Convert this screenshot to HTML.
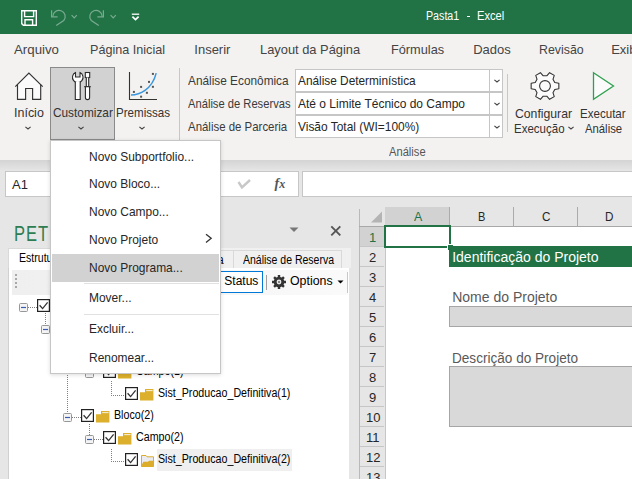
<!DOCTYPE html>
<html><head><meta charset="utf-8"><style>
html,body{margin:0;padding:0;width:632px;height:479px;overflow:hidden;background:#fff}
body{position:relative;font-family:"Liberation Sans",sans-serif}
.r{position:absolute;overflow:visible}
.t{position:absolute;line-height:1;white-space:pre}
</style></head><body>
<div class="r" style="left:0px;top:0px;width:632px;height:34px;background:#217346"></div>
<div class="r" style="left:0px;top:34px;width:632px;height:126px;background:#f3f2f1"></div>
<div class="r" style="left:0px;top:160px;width:632px;height:319px;background:#e6e6e6"></div>
<div class="r" style="left:0px;top:160px;width:632px;height:11px;background:linear-gradient(#d4d4d4,#e6e6e6)"></div>
<svg class="r" style="left:0px;top:0px;" width="160" height="34" viewBox="0 0 160 34">
<g fill="none" stroke="#fff" stroke-width="1.4">
<path d="M21.7 10.7 H36.3 V25.3 H23.4 L21.7 23.6 Z"/>
<path d="M24.6 10.7 V16.6 H33.6 V10.7"/>
<path d="M25 25.3 V19.8 H32.6 V25.3"/>
</g>
<g fill="none" stroke="#7aab90" stroke-width="1.2">
<path d="M51.6 10.3 V16.8 H57.6"/>
<path d="M52.8 16.5 A6.2 6.2 0 1 1 63.75 20.5 L56.2 25.6"/>
<path d="M71.6 15.2 L74.2 17.8 L76.8 15.2"/>
<path d="M103.4 10.3 V16.8 H97.4"/>
<path d="M102.2 16.5 A6.2 6.2 0 1 0 91.25 20.5 L98.8 25.6"/>
<path d="M110.6 15.2 L113.2 17.8 L115.8 15.2"/>
</g>
<path d="M131.8 14.2 H139.2" stroke="#fff" stroke-width="1.3"/>
<path d="M132.4 16.6 L135.5 19.6 L138.6 16.6" fill="none" stroke="#fff" stroke-width="1.7"/>
</svg>
<div class="t" style="left:426px;top:9.74px;font-size:12px;color:#fff;transform:scaleX(0.89);transform-origin:0 0;">Pasta1</div>
<div class="r" style="left:467px;top:16px;width:3px;height:1px;background:#fff"></div>
<div class="t" style="left:476.6px;top:9.74px;font-size:12px;color:#fff;transform:scaleX(0.93);transform-origin:0 0;">Excel</div>
<div class="t" style="left:13.5px;top:43.20px;font-size:13px;color:#444;transform:scaleX(1.02);transform-origin:0 0;">Arquivo</div>
<div class="t" style="left:89.5px;top:43.20px;font-size:13px;color:#444;transform:scaleX(0.97);transform-origin:0 0;">Página Inicial</div>
<div class="t" style="left:194.3px;top:43.20px;font-size:13px;color:#444;transform:scaleX(1.0);transform-origin:0 0;">Inserir</div>
<div class="t" style="left:260.3px;top:43.20px;font-size:13px;color:#444;transform:scaleX(0.99);transform-origin:0 0;">Layout da Página</div>
<div class="t" style="left:391.3px;top:43.20px;font-size:13px;color:#444;transform:scaleX(0.98);transform-origin:0 0;">Fórmulas</div>
<div class="t" style="left:473.2px;top:43.20px;font-size:13px;color:#444;transform:scaleX(1.0);transform-origin:0 0;">Dados</div>
<div class="t" style="left:538.6px;top:43.20px;font-size:13px;color:#444;transform:scaleX(0.95);transform-origin:0 0;">Revisão</div>
<div class="t" style="left:611.2px;top:43.20px;font-size:13px;color:#444;">Exib</div>
<svg class="r" style="left:10px;top:68px;" width="40" height="35" viewBox="0 0 40 35">
<path d="M7.5 16.6 V31.4 H15.6 V20.5 H22.6 V31.4 H30.7 V16.6" fill="#fbfbfb" stroke="#333" stroke-width="1.15"/>
<path d="M7.5 16.6 L18.9 5.2 L30.7 16.6 Z" fill="#fbfbfb"/>
<path d="M5.3 18.6 L18.9 5 L32.7 18.6" fill="none" stroke="#333" stroke-width="1.2"/>
</svg>
<div class="t" style="left:13.6px;top:105.80px;font-size:13px;color:#333;transform:scaleX(0.96);transform-origin:0 0;">Início</div>
<svg class="r" style="left:24.3px;top:125.19999999999999px;" width="8" height="6" viewBox="0 0 8 6"><path d="M1.4 1.9 L4 4.0 L6.6 1.9" fill="none" stroke="#444" stroke-width="1.15"/></svg>
<div class="r" style="left:50px;top:67px;width:65px;height:73px;background:#d2d2d2;border:1px solid #8a8a8a;box-sizing:border-box"></div>
<svg class="r" style="left:60px;top:64px;" width="50" height="40" viewBox="0 0 50 40">
<g fill="#fff" stroke="#2b2b2b" stroke-width="1.1">
<path d="M15.5 8.5 A5.3 5.3 0 1 0 20 8.5 V13 H15.5 Z" />
<path d="M15.3 17.5 V35.5 H20.2 V17.5"/>
<rect x="25.3" y="8.5" width="4.4" height="5" />
<path d="M26.3 13.5 V22.5 H28.7 V13.5"/>
<path d="M24.2 22.7 H30.8"/>
<path d="M25.4 22.7 V33.5 Q25.4 35.6 27.5 35.6 Q29.6 35.6 29.6 33.5 V22.7 Z"/>
</g>
</svg>
<div class="t" style="left:52.5px;top:105.80px;font-size:13px;color:#333;transform:scaleX(0.91);transform-origin:0 0;">Customizar</div>
<svg class="r" style="left:77.4px;top:125.1px;" width="8" height="6" viewBox="0 0 8 6"><path d="M1.4 1.9 L4 4.0 L6.6 1.9" fill="none" stroke="#444" stroke-width="1.15"/></svg>
<svg class="r" style="left:125px;top:68px;" width="38" height="35" viewBox="0 0 38 35">
<path d="M4.5 4 V31.5 H32" fill="none" stroke="#333" stroke-width="1.1"/>
<g fill="#555">
<rect x="7.9" y="22.9" width="2" height="2"/><rect x="15.1" y="17.9" width="2" height="2"/>
<rect x="15.1" y="27.7" width="2" height="2"/><rect x="20.9" y="23.8" width="2" height="2"/>
<rect x="23" y="12.9" width="2" height="2"/><rect x="26.9" y="17.8" width="2" height="2"/>
<rect x="26.9" y="4.9" width="2" height="2"/>
</g>
<path d="M6 26.9 C14 26.8 27 22 31.2 5.1" fill="none" stroke="#3a96dd" stroke-width="1.5"/>
</svg>
<div class="t" style="left:116px;top:105.80px;font-size:13px;color:#333;transform:scaleX(0.89);transform-origin:0 0;">Premissas</div>
<svg class="r" style="left:138.4px;top:125.1px;" width="8" height="6" viewBox="0 0 8 6"><path d="M1.4 1.9 L4 4.0 L6.6 1.9" fill="none" stroke="#444" stroke-width="1.15"/></svg>
<div class="r" style="left:179px;top:68px;width:1px;height:88px;background:#c8c8c8"></div>
<div class="t" style="left:188.2px;top:74.10px;font-size:13px;color:#3a3a3a;transform:scaleX(0.91);transform-origin:0 0;">Análise Econômica</div>
<div class="t" style="left:188.2px;top:97.00px;font-size:13px;color:#3a3a3a;transform:scaleX(0.86);transform-origin:0 0;">Análise de Reservas</div>
<div class="t" style="left:188.2px;top:120.20px;font-size:13px;color:#3a3a3a;transform:scaleX(0.88);transform-origin:0 0;">Análise de Parceria</div>
<div class="r" style="left:295px;top:69px;width:208px;height:23px;background:#fff;border:1px solid #c6c6c6;box-sizing:border-box"></div>
<div class="r" style="left:489px;top:69px;width:1px;height:23px;background:#c6c6c6"></div>
<svg class="r" style="left:492.8px;top:78.4px;" width="8" height="6" viewBox="0 0 8 6"><path d="M1.4 1.9 L4 4.0 L6.6 1.9" fill="none" stroke="#444" stroke-width="1.15"/></svg>
<div class="t" style="left:298.4px;top:73.50px;font-size:13px;color:#262626;transform:scaleX(0.91);transform-origin:0 0;">Análise Determinística</div>
<div class="r" style="left:295px;top:92px;width:208px;height:23px;background:#fff;border:1px solid #c6c6c6;box-sizing:border-box"></div>
<div class="r" style="left:489px;top:92px;width:1px;height:23px;background:#c6c6c6"></div>
<svg class="r" style="left:492.8px;top:101.4px;" width="8" height="6" viewBox="0 0 8 6"><path d="M1.4 1.9 L4 4.0 L6.6 1.9" fill="none" stroke="#444" stroke-width="1.15"/></svg>
<div class="t" style="left:298.4px;top:96.50px;font-size:13px;color:#262626;transform:scaleX(0.922);transform-origin:0 0;">Até o Limite Técnico do Campo</div>
<div class="r" style="left:295px;top:115px;width:208px;height:23px;background:#fff;border:1px solid #c6c6c6;box-sizing:border-box"></div>
<div class="r" style="left:489px;top:115px;width:1px;height:23px;background:#c6c6c6"></div>
<svg class="r" style="left:492.8px;top:124.4px;" width="8" height="6" viewBox="0 0 8 6"><path d="M1.4 1.9 L4 4.0 L6.6 1.9" fill="none" stroke="#444" stroke-width="1.15"/></svg>
<div class="t" style="left:298.4px;top:119.50px;font-size:13px;color:#262626;transform:scaleX(0.918);transform-origin:0 0;">Visão Total (WI=100%)</div>
<div class="r" style="left:507px;top:74px;width:1px;height:58px;background:#c8c8c8"></div>
<svg class="r" style="left:526px;top:68px;" width="38" height="35" viewBox="0 0 38 35">
<polygon fill="#fbfbfb" stroke="#333" stroke-width="1.1" stroke-linejoin="round" points="28.77,14.44 32.84,15.31 32.84,20.69 28.77,21.56 26.97,24.68 28.25,28.64 23.59,31.33 20.81,28.24 17.19,28.24 14.41,31.33 9.75,28.64 11.03,24.68 9.23,21.56 5.16,20.69 5.16,15.31 9.23,14.44 11.03,11.32 9.75,7.36 14.41,4.67 17.19,7.76 20.81,7.76 23.59,4.67 28.25,7.36 26.97,11.32"/>
<circle cx="19" cy="18" r="5.4" fill="none" stroke="#333" stroke-width="1.1"/>
</svg>
<div class="t" style="left:515.3px;top:106.50px;font-size:13px;color:#333;transform:scaleX(0.94);transform-origin:0 0;">Configurar</div>
<div class="t" style="left:513.6px;top:122.00px;font-size:13px;color:#333;transform:scaleX(0.885);transform-origin:0 0;">Execução</div>
<svg class="r" style="left:566.8px;top:125.19999999999999px;" width="8" height="6" viewBox="0 0 8 6"><path d="M1.4 1.9 L4 4.0 L6.6 1.9" fill="none" stroke="#444" stroke-width="1.15"/></svg>
<svg class="r" style="left:588px;top:68px;" width="30" height="35" viewBox="0 0 30 35">
<path d="M5.5 4.7 L25.5 18 L5.5 31.3 Z" fill="#fbfbfb" stroke="#2ea04f" stroke-width="1.3" stroke-linejoin="miter"/>
</svg>
<div class="t" style="left:579.6px;top:106.50px;font-size:13px;color:#333;transform:scaleX(0.89);transform-origin:0 0;">Executar</div>
<div class="t" style="left:584.5px;top:122.00px;font-size:13px;color:#333;transform:scaleX(0.87);transform-origin:0 0;">Análise</div>
<div class="t" style="left:389px;top:145.84px;font-size:12px;color:#555;transform:scaleX(0.93);transform-origin:0 0;">Análise</div>
<div class="r" style="left:5px;top:171px;width:294px;height:26px;background:#fff;border:1px solid #c6c6c6;box-sizing:border-box"></div>
<div class="t" style="left:12px;top:177.60px;font-size:13px;color:#262626;">A1</div>
<svg class="r" style="left:236px;top:176px;" width="18" height="16" viewBox="0 0 18 16"><path d="M2.5 6 L6 11.5 L14 4" fill="none" stroke="#c8c8c8" stroke-width="2.4"/></svg>
<div class="t" style="left:274.5px;top:177.15px;font-size:14px;color:#555;font-family:'Liberation Serif',serif;font-style:italic;font-weight:bold;">f<span style="font-size:12px">x</span></div>
<div class="r" style="left:302px;top:171px;width:340px;height:26px;background:#fff;border:1px solid #c6c6c6;box-sizing:border-box"></div>
<div class="t" style="left:14.3px;top:222.98px;font-size:22px;color:#2e7d52;transform:scaleX(0.75);transform-origin:0 0;letter-spacing:1.3px;">PETR</div>
<svg class="r" style="left:288px;top:226px;" width="12" height="8" viewBox="0 0 12 8"><path d="M1.5 1.5 H10.5 L6 6 Z" fill="#777"/></svg>
<svg class="r" style="left:329px;top:224px;" width="14" height="14" viewBox="0 0 14 14"><path d="M2.3 2.3 L11.3 11.3 M11.3 2.3 L2.3 11.3" stroke="#555" stroke-width="1.9"/></svg>
<div class="r" style="left:8px;top:248px;width:343px;height:20px;background:#f0f0f0"></div>
<div class="r" style="left:8px;top:248px;width:60px;height:21px;background:#fff;border:1px solid #d9d9d9;border-bottom:none;box-sizing:border-box"></div>
<div class="t" style="left:18.8px;top:251.64px;font-size:12px;color:#000;transform:scaleX(0.88);transform-origin:0 0;">Estrutura</div>
<div class="r" style="left:150px;top:250px;width:84px;height:18px;background:#f0f0f0;border:1px solid #d9d9d9;border-bottom:none;box-sizing:border-box"></div>
<div class="t" style="right:408px;top:254.04px;font-size:12px;color:#000;transform:scaleX(0.88);transform-origin:100% 0">Premissas Econômica</div>
<div class="r" style="left:233px;top:250px;width:109px;height:18px;background:#f0f0f0;border:1px solid #d9d9d9;border-bottom:none;box-sizing:border-box"></div>
<div class="t" style="left:242.6px;top:254.04px;font-size:12px;color:#000;transform:scaleX(0.875);transform-origin:0 0;">Análise de Reserva</div>
<div class="r" style="left:8px;top:268px;width:341px;height:211px;background:#fff;border-left:1px solid #d0d0d0;box-sizing:border-box"></div>
<div class="r" style="left:12px;top:270px;width:336px;height:25px;background:linear-gradient(90deg,#efefef,#fafafa)"></div>
<div class="r" style="left:347px;top:272px;width:1px;height:21px;background:#c8c8c8"></div>
<div class="r" style="left:15px;top:274px;width:2px;height:2px;background:#a8a8a8"></div>
<div class="r" style="left:15px;top:278px;width:2px;height:2px;background:#a8a8a8"></div>
<div class="r" style="left:15px;top:282px;width:2px;height:2px;background:#a8a8a8"></div>
<div class="r" style="left:15px;top:286px;width:2px;height:2px;background:#a8a8a8"></div>
<div class="r" style="left:190px;top:271px;width:73px;height:22px;background:#fff;border:1px solid #0078d7;box-sizing:border-box"></div>
<div class="t" style="left:224.3px;top:275.44px;font-size:12px;color:#000;transform:scaleX(1.0);transform-origin:0 0;">Status</div>
<div class="r" style="left:266px;top:275px;width:1px;height:15px;background:#a0a0a0"></div>
<svg class="r" style="left:271px;top:274px;" width="16" height="16" viewBox="0 0 16 16">
<g transform="translate(8,8)" fill="#333">
<circle r="5.3"/>
<g stroke="#333" stroke-width="2.4">
<path d="M0 -7 V7 M-7 0 H7 M-4.95 -4.95 L4.95 4.95 M4.95 -4.95 L-4.95 4.95"/>
</g>
<circle r="2.4" fill="#e8e8e8"/>
<circle r="1" fill="#666"/>
</g></svg>
<div class="t" style="left:289.6px;top:275.44px;font-size:12px;color:#000;transform:scaleX(1.03);transform-origin:0 0;">Options</div>
<svg class="r" style="left:336px;top:279px;" width="9" height="6" viewBox="0 0 9 6"><path d="M1.5 1.5 H7.5 L4.5 4.5 Z" fill="#000"/></svg>
<div class="r" style="left:45px;top:313px;width:1px;height:12px;background:repeating-linear-gradient(180deg,#808080 0 1px,transparent 1px 2px)"></div>
<div class="r" style="left:67px;top:335px;width:1px;height:78px;background:repeating-linear-gradient(180deg,#808080 0 1px,transparent 1px 2px)"></div>
<div class="r" style="left:89px;top:357px;width:1px;height:12px;background:repeating-linear-gradient(180deg,#808080 0 1px,transparent 1px 2px)"></div>
<div class="r" style="left:111px;top:381px;width:1px;height:14px;background:repeating-linear-gradient(180deg,#808080 0 1px,transparent 1px 2px)"></div>
<div class="r" style="left:89px;top:424px;width:1px;height:11px;background:repeating-linear-gradient(180deg,#808080 0 1px,transparent 1px 2px)"></div>
<div class="r" style="left:111px;top:449px;width:1px;height:12px;background:repeating-linear-gradient(180deg,#808080 0 1px,transparent 1px 2px)"></div>
<div class="r" style="left:157px;top:449px;width:135px;height:22px;background:#efefef"></div>
<svg class="r" style="left:19px;top:303px;" width="9" height="9" viewBox="0 0 9 9"><rect x="0.5" y="0.5" width="8" height="8" rx="1" fill="#f4f4f4" stroke="#979797"/><path d="M2 4.5 H7" stroke="#3a5bb0" stroke-width="1.2"/></svg>
<div class="r" style="left:28px;top:307px;width:9px;height:1px;background:repeating-linear-gradient(90deg,#808080 0 1px,transparent 1px 2px)"></div>
<svg class="r" style="left:37px;top:299px;" width="13" height="13" viewBox="0 0 13 13"><rect x="0.6" y="0.6" width="11.8" height="11.8" fill="#fff" stroke="#222" stroke-width="1.2"/><path d="M2.6 6.2 L5.6 9.6 L10.6 3.4" fill="none" stroke="#333" stroke-width="1.3"/></svg>
<svg class="r" style="left:52px;top:300px;" width="16" height="14" viewBox="0 0 16 14"><path d="M0 4.2 H5 V1 H13.4 V12.4 H0 Z" fill="#dcb02c"/><path d="M6.2 2.6 H12.6" stroke="#f6efd6" stroke-width="1.1"/></svg>
<div class="t" style="left:69.9px;top:299.44px;font-size:12px;color:#000;transform:scaleX(0.89);transform-origin:0 0;">Portfolio</div>
<svg class="r" style="left:41px;top:325px;" width="9" height="9" viewBox="0 0 9 9"><rect x="0.5" y="0.5" width="8" height="8" rx="1" fill="#f4f4f4" stroke="#979797"/><path d="M2 4.5 H7" stroke="#3a5bb0" stroke-width="1.2"/></svg>
<div class="r" style="left:50px;top:329px;width:9px;height:1px;background:repeating-linear-gradient(90deg,#808080 0 1px,transparent 1px 2px)"></div>
<svg class="r" style="left:59px;top:321px;" width="13" height="13" viewBox="0 0 13 13"><rect x="0.6" y="0.6" width="11.8" height="11.8" fill="#fff" stroke="#222" stroke-width="1.2"/><path d="M2.6 6.2 L5.6 9.6 L10.6 3.4" fill="none" stroke="#333" stroke-width="1.3"/></svg>
<svg class="r" style="left:74px;top:322px;" width="16" height="14" viewBox="0 0 16 14"><path d="M0 4.2 H5 V1 H13.4 V12.4 H0 Z" fill="#dcb02c"/><path d="M6.2 2.6 H12.6" stroke="#f6efd6" stroke-width="1.1"/></svg>
<div class="t" style="left:91.9px;top:321.44px;font-size:12px;color:#000;transform:scaleX(0.89);transform-origin:0 0;">Subportfolio</div>
<svg class="r" style="left:63px;top:347px;" width="9" height="9" viewBox="0 0 9 9"><rect x="0.5" y="0.5" width="8" height="8" rx="1" fill="#f4f4f4" stroke="#979797"/><path d="M2 4.5 H7" stroke="#3a5bb0" stroke-width="1.2"/></svg>
<div class="r" style="left:72px;top:351px;width:9px;height:1px;background:repeating-linear-gradient(90deg,#808080 0 1px,transparent 1px 2px)"></div>
<svg class="r" style="left:81px;top:343px;" width="13" height="13" viewBox="0 0 13 13"><rect x="0.6" y="0.6" width="11.8" height="11.8" fill="#fff" stroke="#222" stroke-width="1.2"/><path d="M2.6 6.2 L5.6 9.6 L10.6 3.4" fill="none" stroke="#333" stroke-width="1.3"/></svg>
<svg class="r" style="left:96px;top:344px;" width="16" height="14" viewBox="0 0 16 14"><path d="M0 4.2 H5 V1 H13.4 V12.4 H0 Z" fill="#dcb02c"/><path d="M6.2 2.6 H12.6" stroke="#f6efd6" stroke-width="1.1"/></svg>
<div class="t" style="left:113.9px;top:343.44px;font-size:12px;color:#000;transform:scaleX(0.89);transform-origin:0 0;">Bloco(1)</div>
<svg class="r" style="left:85px;top:369px;" width="9" height="9" viewBox="0 0 9 9"><rect x="0.5" y="0.5" width="8" height="8" rx="1" fill="#f4f4f4" stroke="#979797"/><path d="M2 4.5 H7" stroke="#3a5bb0" stroke-width="1.2"/></svg>
<div class="r" style="left:94px;top:373px;width:9px;height:1px;background:repeating-linear-gradient(90deg,#808080 0 1px,transparent 1px 2px)"></div>
<svg class="r" style="left:103px;top:365px;" width="13" height="13" viewBox="0 0 13 13"><rect x="0.6" y="0.6" width="11.8" height="11.8" fill="#fff" stroke="#222" stroke-width="1.2"/><path d="M2.6 6.2 L5.6 9.6 L10.6 3.4" fill="none" stroke="#333" stroke-width="1.3"/></svg>
<svg class="r" style="left:118px;top:366px;" width="16" height="14" viewBox="0 0 16 14"><path d="M0 4.2 H5 V1 H13.4 V12.4 H0 Z" fill="#dcb02c"/><path d="M6.2 2.6 H12.6" stroke="#f6efd6" stroke-width="1.1"/></svg>
<div class="t" style="left:135.9px;top:365.44px;font-size:12px;color:#000;transform:scaleX(0.89);transform-origin:0 0;">Campo(1)</div>
<div class="r" style="left:111px;top:395px;width:14px;height:1px;background:repeating-linear-gradient(90deg,#808080 0 1px,transparent 1px 2px)"></div>
<svg class="r" style="left:125px;top:387px;" width="13" height="13" viewBox="0 0 13 13"><rect x="0.6" y="0.6" width="11.8" height="11.8" fill="#fff" stroke="#222" stroke-width="1.2"/><path d="M2.6 6.2 L5.6 9.6 L10.6 3.4" fill="none" stroke="#333" stroke-width="1.3"/></svg>
<svg class="r" style="left:140px;top:388px;" width="16" height="14" viewBox="0 0 16 14"><path d="M0 4.2 H5 V1 H13.4 V12.4 H0 Z" fill="#dcb02c"/><path d="M6.2 2.6 H12.6" stroke="#f6efd6" stroke-width="1.1"/></svg>
<div class="t" style="left:157.9px;top:387.44px;font-size:12px;color:#000;transform:scaleX(0.89);transform-origin:0 0;">Sist_Producao_Definitiva(1)</div>
<svg class="r" style="left:63px;top:413px;" width="9" height="9" viewBox="0 0 9 9"><rect x="0.5" y="0.5" width="8" height="8" rx="1" fill="#f4f4f4" stroke="#979797"/><path d="M2 4.5 H7" stroke="#3a5bb0" stroke-width="1.2"/></svg>
<div class="r" style="left:72px;top:417px;width:9px;height:1px;background:repeating-linear-gradient(90deg,#808080 0 1px,transparent 1px 2px)"></div>
<svg class="r" style="left:81px;top:409px;" width="13" height="13" viewBox="0 0 13 13"><rect x="0.6" y="0.6" width="11.8" height="11.8" fill="#fff" stroke="#222" stroke-width="1.2"/><path d="M2.6 6.2 L5.6 9.6 L10.6 3.4" fill="none" stroke="#333" stroke-width="1.3"/></svg>
<svg class="r" style="left:96px;top:410px;" width="16" height="14" viewBox="0 0 16 14"><path d="M0 4.2 H5 V1 H13.4 V12.4 H0 Z" fill="#dcb02c"/><path d="M6.2 2.6 H12.6" stroke="#f6efd6" stroke-width="1.1"/></svg>
<div class="t" style="left:113.9px;top:409.44px;font-size:12px;color:#000;transform:scaleX(0.89);transform-origin:0 0;">Bloco(2)</div>
<svg class="r" style="left:85px;top:435px;" width="9" height="9" viewBox="0 0 9 9"><rect x="0.5" y="0.5" width="8" height="8" rx="1" fill="#f4f4f4" stroke="#979797"/><path d="M2 4.5 H7" stroke="#3a5bb0" stroke-width="1.2"/></svg>
<div class="r" style="left:94px;top:439px;width:9px;height:1px;background:repeating-linear-gradient(90deg,#808080 0 1px,transparent 1px 2px)"></div>
<svg class="r" style="left:103px;top:431px;" width="13" height="13" viewBox="0 0 13 13"><rect x="0.6" y="0.6" width="11.8" height="11.8" fill="#fff" stroke="#222" stroke-width="1.2"/><path d="M2.6 6.2 L5.6 9.6 L10.6 3.4" fill="none" stroke="#333" stroke-width="1.3"/></svg>
<svg class="r" style="left:118px;top:432px;" width="16" height="14" viewBox="0 0 16 14"><path d="M0 4.2 H5 V1 H13.4 V12.4 H0 Z" fill="#dcb02c"/><path d="M6.2 2.6 H12.6" stroke="#f6efd6" stroke-width="1.1"/></svg>
<div class="t" style="left:135.9px;top:431.44px;font-size:12px;color:#000;transform:scaleX(0.89);transform-origin:0 0;">Campo(2)</div>
<div class="r" style="left:111px;top:461px;width:14px;height:1px;background:repeating-linear-gradient(90deg,#808080 0 1px,transparent 1px 2px)"></div>
<svg class="r" style="left:125px;top:453px;" width="13" height="13" viewBox="0 0 13 13"><rect x="0.6" y="0.6" width="11.8" height="11.8" fill="#fff" stroke="#222" stroke-width="1.2"/><path d="M2.6 6.2 L5.6 9.6 L10.6 3.4" fill="none" stroke="#333" stroke-width="1.3"/></svg>
<svg class="r" style="left:140px;top:454px;" width="16" height="14" viewBox="0 0 16 14"><path d="M1.5 1.5 H6 L7 2.8 H13.5 V12.5 H1.5 Z" fill="#ebebf2" stroke="#d9ac2a" stroke-width="1"/><path d="M1 12.5 L3.3 7.8 H8 L9 6.8 H14.2 L13.5 12.5 Z" fill="#dcad2b"/></svg>
<div class="t" style="left:157.9px;top:453.44px;font-size:12px;color:#000;transform:scaleX(0.89);transform-origin:0 0;">Sist_Producao_Definitiva(2)</div>
<div class="r" style="left:359px;top:207px;width:273px;height:272px;background:#fff"></div>
<div class="r" style="left:359px;top:207px;width:273px;height:20px;background:#e6e6e6"></div>
<div class="r" style="left:359px;top:209px;width:1px;height:270px;background:#b9b9b9"></div>
<svg class="r" style="left:368px;top:209px;" width="16" height="16" viewBox="0 0 16 16"><path d="M3 13.5 H14 V2.5 Z" fill="#b4b4b4"/></svg>
<div class="r" style="left:385px;top:207px;width:64px;height:20px;background:#d2d2d2"></div>
<div class="r" style="left:359px;top:226px;width:273px;height:1px;background:#a8a8a8"></div>
<div class="r" style="left:449px;top:207px;width:1px;height:19px;background:#ababab"></div>
<div class="r" style="left:513px;top:207px;width:1px;height:19px;background:#ababab"></div>
<div class="r" style="left:577px;top:207px;width:1px;height:19px;background:#ababab"></div>
<div class="t" style="left:413.5px;top:210.10px;font-size:13px;color:#217346;transform:scaleX(0.95);transform-origin:0 0;">A</div>
<div class="t" style="left:478.3px;top:210.10px;font-size:13px;color:#262626;transform:scaleX(0.85);transform-origin:0 0;">B</div>
<div class="t" style="left:541.7px;top:210.10px;font-size:13px;color:#262626;transform:scaleX(0.9);transform-origin:0 0;">C</div>
<div class="t" style="left:604.5px;top:210.10px;font-size:13px;color:#262626;transform:scaleX(0.9);transform-origin:0 0;">D</div>
<div class="r" style="left:360px;top:227px;width:25px;height:252px;background:#e6e6e6"></div>
<div class="r" style="left:360px;top:227px;width:25px;height:19px;background:#d2d2d2"></div>
<div class="r" style="left:385px;top:226px;width:1px;height:253px;background:#c6c6c6"></div>
<div class="r" style="left:360px;top:246px;width:24px;height:1px;background:#c6c6c6"></div>
<div class="t" style="left:369px;top:230.80px;font-size:13px;color:#217346;">1</div>
<div class="r" style="left:360px;top:266px;width:24px;height:1px;background:#c6c6c6"></div>
<div class="t" style="left:369px;top:250.80px;font-size:13px;color:#262626;">2</div>
<div class="r" style="left:360px;top:286px;width:24px;height:1px;background:#c6c6c6"></div>
<div class="t" style="left:369px;top:270.80px;font-size:13px;color:#262626;">3</div>
<div class="r" style="left:360px;top:306px;width:24px;height:1px;background:#c6c6c6"></div>
<div class="t" style="left:369px;top:290.80px;font-size:13px;color:#262626;">4</div>
<div class="r" style="left:360px;top:326px;width:24px;height:1px;background:#c6c6c6"></div>
<div class="t" style="left:369px;top:310.80px;font-size:13px;color:#262626;">5</div>
<div class="r" style="left:360px;top:346px;width:24px;height:1px;background:#c6c6c6"></div>
<div class="t" style="left:369px;top:330.80px;font-size:13px;color:#262626;">6</div>
<div class="r" style="left:360px;top:366px;width:24px;height:1px;background:#c6c6c6"></div>
<div class="t" style="left:369px;top:350.80px;font-size:13px;color:#262626;">7</div>
<div class="r" style="left:360px;top:386px;width:24px;height:1px;background:#c6c6c6"></div>
<div class="t" style="left:369px;top:370.80px;font-size:13px;color:#262626;">8</div>
<div class="r" style="left:360px;top:406px;width:24px;height:1px;background:#c6c6c6"></div>
<div class="t" style="left:369px;top:390.80px;font-size:13px;color:#262626;">9</div>
<div class="r" style="left:360px;top:426px;width:24px;height:1px;background:#c6c6c6"></div>
<div class="t" style="left:366px;top:410.80px;font-size:13px;color:#262626;">10</div>
<div class="r" style="left:360px;top:446px;width:24px;height:1px;background:#c6c6c6"></div>
<div class="t" style="left:366px;top:430.80px;font-size:13px;color:#262626;">11</div>
<div class="r" style="left:360px;top:466px;width:24px;height:1px;background:#c6c6c6"></div>
<div class="t" style="left:366px;top:450.80px;font-size:13px;color:#262626;">12</div>
<div class="r" style="left:360px;top:486px;width:24px;height:1px;background:#c6c6c6"></div>
<div class="t" style="left:366px;top:470.80px;font-size:13px;color:#262626;">13</div>
<div class="r" style="left:384px;top:225px;width:67px;height:23px;border:2px solid #217346;box-sizing:border-box"></div>
<div class="r" style="left:447px;top:244px;width:5px;height:5px;background:#217346;border:1px solid #fff"></div>
<div class="r" style="left:449px;top:246px;width:183px;height:21px;background:#217346"></div>
<div class="t" style="left:452.2px;top:250.05px;font-size:14px;color:#fff;">Identificação do Projeto</div>
<div class="t" style="left:452.2px;top:290.45px;font-size:14px;color:#595959;">Nome do Projeto</div>
<div class="r" style="left:449px;top:306px;width:183px;height:21px;background:#d9d9d9;border:1px solid #a6a6a6;border-right:none;box-sizing:border-box"></div>
<div class="t" style="left:452.2px;top:350.95px;font-size:14px;color:#595959;transform:scaleX(0.97);transform-origin:0 0;">Descrição do Projeto</div>
<div class="r" style="left:449px;top:366px;width:183px;height:61px;background:#d9d9d9;border:1px solid #a6a6a6;border-right:none;box-sizing:border-box"></div>
<div class="r" style="left:50px;top:140px;width:171px;height:234px;background:#fff;border:1px solid #c6c6c6;box-sizing:border-box;box-shadow:0 1px 4px rgba(0,0,0,0.14)"></div>
<div class="r" style="left:52px;top:254px;width:167px;height:28px;background:#d2d2d2"></div>
<div class="r" style="left:84px;top:283px;width:135px;height:1px;background:#e1e1e1"></div>
<div class="r" style="left:84px;top:314px;width:135px;height:1px;background:#e1e1e1"></div>
<div class="t" style="left:88.6px;top:149.70px;font-size:13px;color:#262626;transform:scaleX(0.92);transform-origin:0 0;">Novo Subportfolio...</div>
<div class="t" style="left:88.6px;top:177.40px;font-size:13px;color:#262626;transform:scaleX(0.92);transform-origin:0 0;">Novo Bloco...</div>
<div class="t" style="left:88.6px;top:205.00px;font-size:13px;color:#262626;transform:scaleX(0.92);transform-origin:0 0;">Novo Campo...</div>
<div class="t" style="left:88.6px;top:233.00px;font-size:13px;color:#262626;transform:scaleX(0.92);transform-origin:0 0;">Novo Projeto</div>
<div class="t" style="left:88.6px;top:261.00px;font-size:13px;color:#262626;transform:scaleX(0.92);transform-origin:0 0;">Novo Programa...</div>
<div class="t" style="left:88.6px;top:291.40px;font-size:13px;color:#262626;transform:scaleX(0.92);transform-origin:0 0;">Mover...</div>
<div class="t" style="left:88.6px;top:322.40px;font-size:13px;color:#262626;transform:scaleX(0.92);transform-origin:0 0;">Excluir...</div>
<div class="t" style="left:88.6px;top:350.60px;font-size:13px;color:#262626;transform:scaleX(0.92);transform-origin:0 0;">Renomear...</div>
<svg class="r" style="left:203px;top:233px;" width="10" height="12" viewBox="0 0 10 12"><path d="M3 1.2 L8.2 5.3 L3 9.5" fill="none" stroke="#333" stroke-width="1.3"/></svg>
</body></html>
